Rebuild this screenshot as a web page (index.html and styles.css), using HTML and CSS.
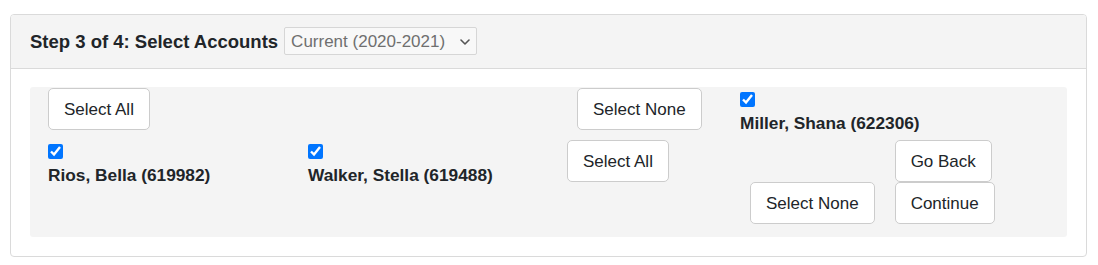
FILE: index.html
```html
<!DOCTYPE html>
<html lang="en">
<head>
    <meta charset="UTF-8">
    <meta name="viewport" content="width=device-width, initial-scale=1.0">
    <title>Select Accounts</title>
    <link rel="stylesheet" href="styles.css">
</head>
<body>
    <div class="page">
        <div class="card">
            <div class="card-header">
                <h2 class="step-title">Step 3 of 4: Select Accounts</h2>
                <span class="year-select">
                    <select>
                        <option>Current (2020-2021)</option>
                    </select>
                    <svg class="chevron" width="10" height="6" viewBox="0 0 10 6">
                        <path d="M1 1 L5 5 L9 1" fill="none" stroke="#555" stroke-width="1.6" stroke-linecap="round" stroke-linejoin="round"/>
                    </svg>
                </span>
            </div>

            <div class="card-body">
                <div class="accounts">
                    <div class="row row-top">
                        <div><button class="btn">Select All</button></div>
                        <div><button class="btn">Select None</button></div>
                        <label class="student">
                            <input type="checkbox" checked>
                            <strong>Miller, Shana (622306)</strong>
                        </label>
                    </div>

                    <div class="row row-main">
                        <label class="student">
                            <input type="checkbox" checked>
                            <strong>Rios, Bella (619982)</strong>
                        </label>
                        <label class="student">
                            <input type="checkbox" checked>
                            <strong>Walker, Stella (619488)</strong>
                        </label>
                        <div><button class="btn">Select All</button></div>
                        <div class="actions">
                            <button class="btn btn-back">Go Back</button>
                            <button class="btn btn-none">Select None</button>
                            <button class="btn btn-continue">Continue</button>
                        </div>
                    </div>
                </div>
            </div>
        </div>
    </div>
</body>
</html>
```

FILE: styles.css
```css
:root {
    --text-color: #212529;
    --muted-color: #6f6f6f;
    --border-color: #dadada;
    --panel-bg: #f4f4f4;
    --btn-border: #cccccc;
}

* {
    box-sizing: border-box;
    margin: 0;
    padding: 0;
    font-family: 'Liberation Sans', Arial, sans-serif;
}

body {
    background: #ffffff;
    color: var(--text-color);
}

.page {
    padding: 14px 11px 0 10px;
}

.card {
    border: 1px solid var(--border-color);
    border-radius: 4px;
    overflow: hidden;
}

.card-header {
    height: 54px;
    padding: 2px 19px 0;
    display: flex;
    align-items: center;
    background: var(--panel-bg);
    border-bottom: 1px solid var(--border-color);
}

.step-title {
    font-size: 18.5px;
    font-weight: bold;
    line-height: 1.2;
}

.year-select {
    position: relative;
    margin-left: 6px;
    display: inline-flex;
    margin-top: -3px;
}

.year-select select {
    appearance: none;
    -webkit-appearance: none;
    width: 193px;
    height: 28px;
    padding: 0 30px 0 6px;
    font-size: 17px;
    color: var(--muted-color);
    background: #f8f8f8;
    border: 1px solid #d6d6d6;
    border-radius: 2px;
    outline: none;
}

.year-select .chevron {
    position: absolute;
    right: 7px;
    top: 12px;
    pointer-events: none;
}

.card-body {
    padding: 18px 19px 19px;
}

.accounts {
    background: var(--panel-bg);
    border-radius: 3px;
    padding: 1px 18px 13px;
    display: flex;
    flex-direction: column;
    gap: 5px;
}

.row {
    display: grid;
    align-items: start;
}

.row-top {
    grid-template-columns: 529px 163px auto;
}

.row-main {
    grid-template-columns: 260px 259px 183px auto;
}

.btn {
    font-size: 17px;
    line-height: 24px;
    padding: 9px 15px 7px;
    color: var(--text-color);
    background: #ffffff;
    border: 1px solid var(--btn-border);
    border-radius: 5px;
    cursor: pointer;
}

.student {
    display: flex;
    flex-direction: column;
    align-items: flex-start;
}

.student input {
    width: 15px;
    height: 15px;
    margin: 4px 0 2px;
    accent-color: #0075ff;
}

.student strong {
    font-size: 17.3px;
    line-height: 24px;
    padding-top: 2px;
    font-weight: bold;
}

.actions {
    display: grid;
    grid-template-columns: auto auto;
    column-gap: 20px;
    justify-content: start;
    justify-items: start;
}

.btn-back {
    grid-column: 2;
    grid-row: 1;
}

.btn-none {
    grid-column: 1;
    grid-row: 2;
}

.btn-continue {
    grid-column: 2;
    grid-row: 2;
}
```
